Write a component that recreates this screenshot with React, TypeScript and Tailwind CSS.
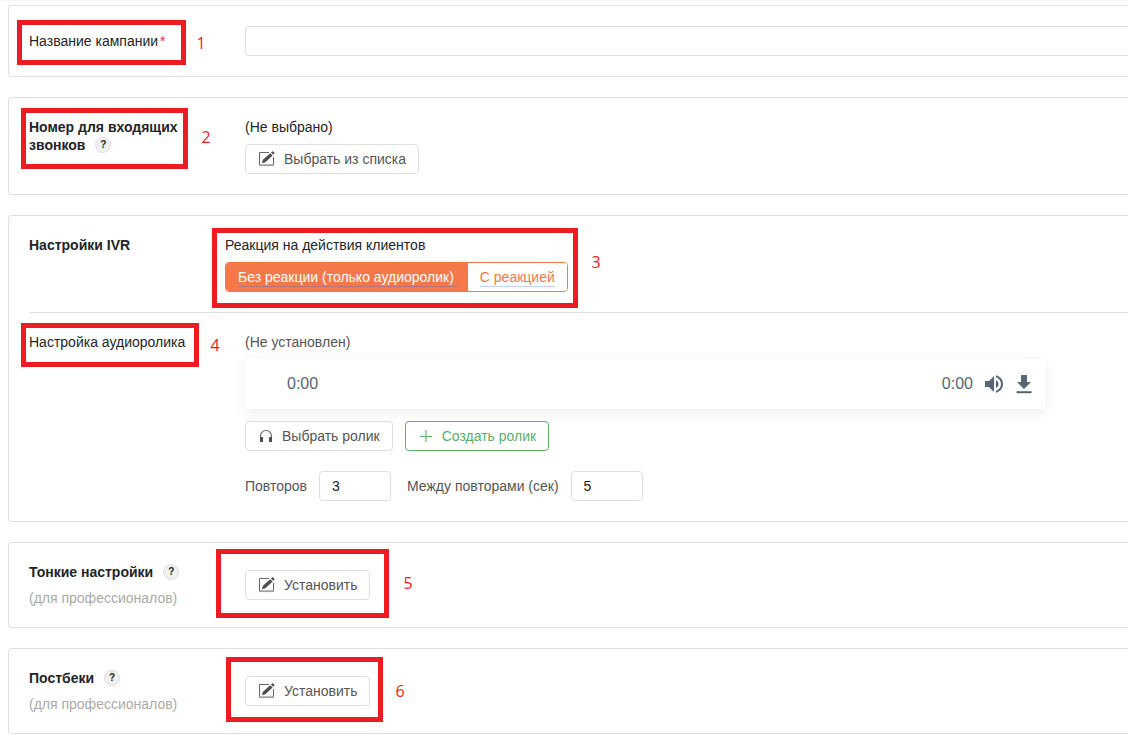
import type { ReactNode } from 'react';
import { MdVolumeUp } from 'react-icons/md';

function Card({ children }: { children: ReactNode }) {
  return (
    <section className="rounded-l-[4px] border border-r-0 border-[#e0e0e0] py-5 pl-5">{children}</section>
  );
}

function EditIcon() {
  return (
    <svg viewBox="0 0 16 16" className="size-4 shrink-0" fill="none" aria-hidden="true">
      <path d="M10 1.5H1.2a.7.7 0 0 0-.7.7V14" stroke="#666" strokeWidth="1.1" />
      <path d="M14.5 6v8" stroke="#666" strokeWidth="1.1" />
      <path d="M0 14.2h15" stroke="#a0a0a0" strokeWidth="1.8" />
      <path d="M3 12.2l.9-3.4 7.3-6.6 2.4 2.4-7.2 6.7z" fill="#4d4d4d" />
      <path d="M12 1.5l1-1a.8.8 0 0 1 1.1 0l1.1 1.1a.8.8 0 0 1 0 1.1l-.9 1z" fill="#4d4d4d" />
    </svg>
  );
}

function HeadphonesIcon() {
  return (
    <svg viewBox="0 0 14 14" className="size-3.5 shrink-0" fill="none" aria-hidden="true">
      <path d="M1.5 9.5V7a5.5 5.5 0 0 1 11 0v2.5" stroke="#666" strokeWidth="1.2" />
      <rect x="1" y="8" width="3" height="5" rx=".6" fill="#4d4d4d" />
      <rect x="10" y="8" width="3" height="5" rx=".6" fill="#4d4d4d" />
    </svg>
  );
}

function PlusIcon() {
  return (
    <svg viewBox="0 0 12 12" className="size-3 shrink-0" fill="none" aria-hidden="true">
      <path d="M6 0v12" stroke="#a5d3ae" strokeWidth="2" />
      <path d="M0 6.5h12" stroke="#5aae6b" />
    </svg>
  );
}

function DownloadIcon() {
  return (
    <svg viewBox="0 0 24 24" className="size-6" fill="currentColor" aria-hidden="true">
      <path d="M19 10h-4V3H9v7H5l7 7z" />
      <path d="M4.5 19.2h15v2h-15z" />
    </svg>
  );
}

function EditButton({ children }: { children: ReactNode }) {
  return (
    <button
      type="button"
      className="flex h-[30px] items-center gap-2 rounded-[4px] border border-[#dedede] bg-white px-3 text-[#555]"
    >
      <span className="flex w-[18px] justify-center">
        <EditIcon />
      </span>
      {children}
    </button>
  );
}

function Help() {
  return (
    <button
      type="button"
      aria-label="Подсказка"
      className="flex size-4 items-center justify-center rounded-full border border-[#e0e0e0] bg-[#f0f0f0] text-[10px] leading-none font-bold text-[#222]"
    >
      ?
    </button>
  );
}

function Mark({ box, label, n }: { box: string; label: string; n: number }) {
  return (
    <>
      <div className={`pointer-events-none absolute border-[5px] border-[#ed1c24] ${box}`} />
      <span
        className={`pointer-events-none absolute w-5 text-center font-['Open_Sans',sans-serif] text-[16px] leading-5 text-[#ed1c24] ${label}`}
      >
        {n}
      </span>
    </>
  );
}

function ProSection({ title }: { title: string }) {
  return (
    <Card>
      <div className="flex items-center">
        <div className="w-[216px] shrink-0">
          <div className="flex items-center gap-2.5">
            <h2 className="font-bold">{title}</h2>
            <Help />
          </div>
          <p className="mt-2 text-[#aaa]">(для профессионалов)</p>
        </div>
        <EditButton>Установить</EditButton>
      </div>
    </Card>
  );
}

export default function App() {
  const field = 'h-[30px] w-[72px] rounded-[4px] border border-[#dedede] bg-white px-3 text-[#222]';
  return (
    <main className="relative overflow-hidden border-t border-[#f5f5f5] bg-white font-['Liberation_Sans',Arial,sans-serif] text-[14px] leading-[18px] text-[#212529]">
      <form className="flex flex-col gap-5 pt-1 pb-2 pl-2" onSubmit={(e) => e.preventDefault()}>
        <Card>
          <div className="flex items-center">
            <label htmlFor="name" className="w-[216px] shrink-0">
              Название кампании<span className="ml-0.5 text-[#dc3545]">*</span>
            </label>
            <input
              id="name"
              type="text"
              className="h-[30px] min-w-0 grow rounded-l-[4px] border border-r-0 border-[#dedede] bg-white px-3"
            />
          </div>
        </Card>

        <Card>
          <div className="flex">
            <div className="w-[216px] shrink-0">
              <h2 className="font-bold">
                <span className="block">Номер для входящих </span>
                <span className="flex items-center gap-2.5">
                  <span>звонков</span>
                  <Help />
                </span>
              </h2>
            </div>
            <div className="flex flex-col items-start gap-2">
              <p>(Не выбрано)</p>
              <EditButton>Выбрать из списка</EditButton>
            </div>
          </div>
        </Card>

        <Card>
          <div className="flex border-b border-[#e0e0e0] pb-5">
            <h2 className="w-[196px] shrink-0 font-bold">Настройки IVR</h2>
            <div className="flex flex-col gap-2">
              <p>Реакция на действия клиентов</p>
              <div className="flex h-[30px] items-stretch overflow-hidden rounded-[4px] border border-[#f5784b]">
                <button type="button" className="flex items-center bg-[#f5784b] pr-2 pl-3 text-white">
                  <span className="border-b border-[#b9737c] pr-1">Без реакции (только аудиоролик)</span>
                </button>
                <button
                  type="button"
                  className="flex items-center border-l-2 border-[#f5784b] bg-white px-3 text-[#f5784b]"
                >
                  <span className="border-b border-[#c3d2f5]">С реакцией</span>
                </button>
              </div>
            </div>
          </div>

          <div className="flex pt-5">
            <h3 className="w-[216px] shrink-0">Настройка аудиоролика</h3>
            <div className="grow pr-[83px] text-[#555]">
              <p>(Не установлен)</p>
              <div className="mt-2 flex h-[50px] items-center rounded-[4px] bg-white pr-[9px] pl-[42px] text-[16px] text-[#566574] shadow-[0_4px_16px_rgba(0,0,0,0.07)]">
                <span>0:00</span>
                <span className="ml-auto">0:00</span>
                <button type="button" aria-label="Громкость" className="ml-[9px]">
                  <MdVolumeUp size={24} />
                </button>
                <button type="button" aria-label="Скачать" className="ml-1.5">
                  <DownloadIcon />
                </button>
              </div>
              <div className="mt-3 flex gap-3">
                <button
                  type="button"
                  className="flex h-[30px] items-center gap-2 rounded-[4px] border border-[#dedede] bg-white px-3"
                >
                  <span className="flex w-4 justify-center">
                    <HeadphonesIcon />
                  </span>
                  Выбрать ролик
                </button>
                <button
                  type="button"
                  className="flex h-[30px] items-center gap-2 rounded-[4px] border border-[#5aae6b] bg-white px-3 text-[#5aae6b]"
                >
                  <span className="flex w-4 justify-center">
                    <PlusIcon />
                  </span>
                  Создать ролик
                </button>
              </div>
              <div className="mt-5 flex items-center">
                <label htmlFor="repeats" className="mr-3">
                  Повторов
                </label>
                <input id="repeats" type="text" defaultValue="3" className={field} />
                <label htmlFor="interval" className="mr-3 ml-4">
                  Между повторами (сек)
                </label>
                <input id="interval" type="text" defaultValue="5" className={field} />
              </div>
            </div>
          </div>
        </Card>

        <ProSection title="Тонкие настройки" />
        <ProSection title="Постбеки" />
      </form>

      <Mark n={1} box="left-[17px] top-[19px] h-[45px] w-[169px]" label="left-[191px] top-[32px]" />
      <Mark n={2} box="left-[21px] top-[107px] h-[61px] w-[167px]" label="left-[196px] top-[126px]" />
      <Mark n={3} box="left-[212px] top-[227px] h-[80px] w-[366px]" label="left-[586px] top-[251px]" />
      <Mark n={4} box="left-[21px] top-[322px] h-[44px] w-[178px]" label="left-[205px] top-[334px]" />
      <Mark n={5} box="left-[216px] top-[548px] h-[69px] w-[173px]" label="left-[398px] top-[572px]" />
      <Mark n={6} box="left-[226px] top-[656px] h-[65px] w-[157px]" label="left-[390px] top-[680px]" />
    </main>
  );
}
